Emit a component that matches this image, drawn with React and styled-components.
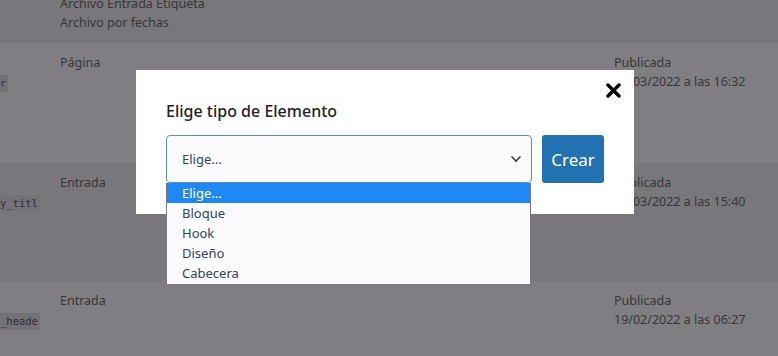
import React, { useState } from 'react';
import styled, { createGlobalStyle } from 'styled-components';

const GlobalStyle = createGlobalStyle`
  html, body {
    margin: 0;
    padding: 0;
    overflow: hidden;
    background: #7a787c;
  }
`;

const rows = [
  { type: ['Archivo Entrada Etiqueta', 'Archivo por fechas'], code: '', date: [], height: 59, shade: 'dark' },
  { type: ['Página'], code: 'r', date: ['Publicada', '17/03/2022 a las 16:32'], height: 120, shade: 'light' },
  { type: ['Entrada'], code: 'y_titl', date: ['Publicada', '17/03/2022 a las 15:40'], height: 118, shade: 'dark' },
  { type: ['Entrada'], code: '_heade', date: ['Publicada', '19/02/2022 a las 06:27'], height: 100, shade: 'light' },
];

const options = ['Elige...', 'Bloque', 'Hook', 'Diseño', 'Cabecera'];

const App = () => {
  const [selected, setSelected] = useState(0);

  return (
    <Page>
      <GlobalStyle />
      <Table>
        {rows.map((row, i) => (
          <Row key={i} $shade={row.shade} $height={row.height}>
            <CodeCell>{row.code && <Code>{row.code}</Code>}</CodeCell>
            <TypeCell>
              {row.type.map((line) => (
                <Line key={line}>{line}</Line>
              ))}
            </TypeCell>
            <DateCell>
              {row.date.map((line) => (
                <Line key={line}>{line}</Line>
              ))}
            </DateCell>
          </Row>
        ))}
      </Table>

      <Modal>
        <CloseButton aria-label="Cerrar">
          <svg width="15" height="15" viewBox="0 0 15 15">
            <path d="M2 2 L13 13 M13 2 L2 13" stroke="#000" strokeWidth="3.4" strokeLinecap="round" />
          </svg>
        </CloseButton>
        <Title>Elige tipo de Elemento</Title>
        <Controls>
          <SelectWrap>
            <SelectBox>
              <span>{options[selected]}</span>
              <svg width="12" height="8" viewBox="0 0 12 8">
                <path d="M1.5 1.5 L6 6 L10.5 1.5" fill="none" stroke="#3c434a" strokeWidth="1.6" />
              </svg>
            </SelectBox>
            <OptionList>
              {options.map((opt, i) => (
                <Option key={opt} $active={i === selected} onClick={() => setSelected(i)}>
                  {opt}
                </Option>
              ))}
            </OptionList>
          </SelectWrap>
          <CreateButton>Crear</CreateButton>
        </Controls>
      </Modal>
    </Page>
  );
};

export default App;

const Page = styled.div`
  position: relative;
  width: 778px;
  height: 356px;
  overflow: hidden;
  font-family: 'Noto Sans', 'Open Sans', sans-serif;
`;

const Table = styled.div`
  display: flex;
  flex-direction: column;
  margin-top: -16px;
`;

const Row = styled.div`
  display: grid;
  grid-template-columns: 60px 554px 1fr;
  height: ${(p) => p.$height}px;
  padding: 10px 0;
  box-sizing: border-box;
  background: ${(p) => (p.$shade === 'dark' ? '#79777b' : '#807e82')};
  color: #37363a;
  font-size: 12.5px;
  line-height: 19px;
`;

const CodeCell = styled.div`
  padding-top: 20px;
  overflow: hidden;
`;

const Code = styled.span`
  display: inline-block;
  font-family: 'DejaVu Sans Mono', 'Liberation Mono', monospace;
  font-size: 10.5px;
  line-height: 17px;
  padding: 0 2px 0 0;
  background: #747276;
  color: #2f2e32;
`;

const TypeCell = styled.div`
  display: flex;
  flex-direction: column;
`;

const DateCell = styled.div`
  display: flex;
  flex-direction: column;
`;

const Line = styled.span`
  white-space: nowrap;
`;

const Modal = styled.div`
  position: absolute;
  top: 70px;
  left: 136px;
  width: 498px;
  height: 144px;
  box-sizing: border-box;
  background: #fff;
  padding: 30px 30px 0;
`;

const CloseButton = styled.button`
  position: absolute;
  top: 13px;
  right: 13px;
  padding: 0;
  border: none;
  background: none;
  line-height: 0;
  cursor: pointer;
`;

const Title = styled.h2`
  margin: 0;
  font-size: 16px;
  font-weight: 500;
  line-height: 22px;
  color: #1d2327;
`;

const Controls = styled.div`
  display: flex;
  gap: 10px;
  margin-top: 13px;
`;

const SelectWrap = styled.div`
  position: relative;
  width: 366px;
`;

const SelectBox = styled.div`
  display: flex;
  align-items: center;
  justify-content: space-between;
  height: 48px;
  box-sizing: border-box;
  padding: 0 9px 0 15px;
  border: 1px solid #5f8fc6;
  border-radius: 4px;
  background: #fbfbfd;
  color: #2c4660;
  font-size: 13px;
`;

const OptionList = styled.ul`
  position: absolute;
  top: 48px;
  left: 0;
  width: 365px;
  margin: 0;
  padding: 0 0 1px;
  list-style: none;
  box-sizing: border-box;
  border: 1px solid #7a797d;
  border-top: none;
  background: #fbfbfd;
`;

const Option = styled.li`
  height: 20px;
  line-height: 20px;
  padding-left: 15px;
  font-size: 13px;
  color: ${(p) => (p.$active ? '#fff' : '#2c4660')};
  background: ${(p) => (p.$active ? '#1e88f5' : 'transparent')};
  cursor: default;
`;

const CreateButton = styled.button`
  width: 62px;
  height: 48px;
  border: none;
  border-radius: 3px;
  background: #2271b1;
  color: #fff;
  font-family: inherit;
  font-size: 17px;
  cursor: pointer;
`;
